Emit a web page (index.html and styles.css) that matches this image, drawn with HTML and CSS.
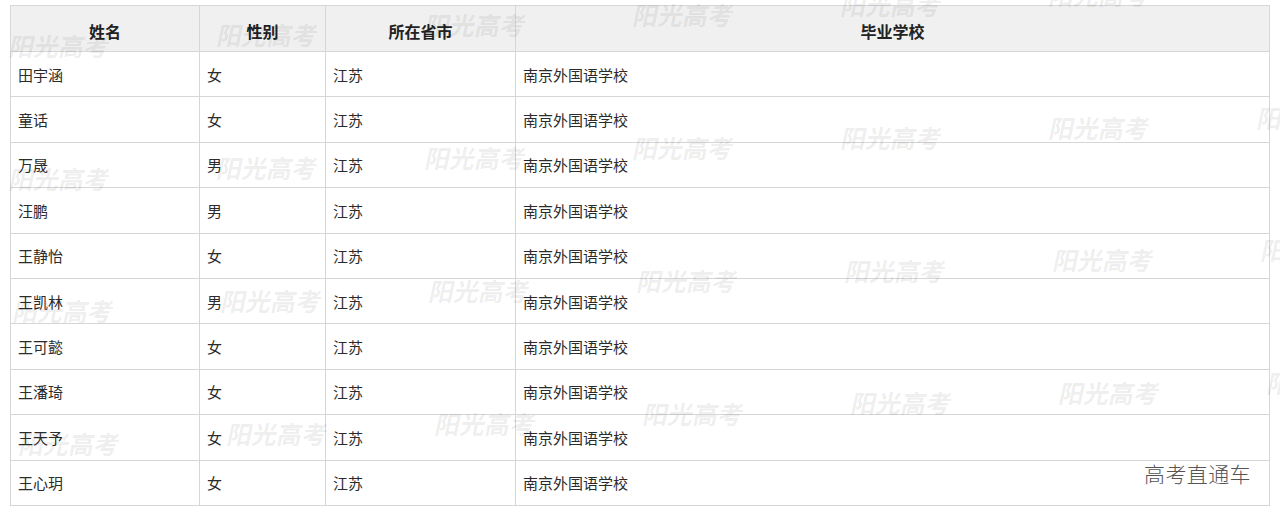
FILE: index.html
```html
<!DOCTYPE html>
<html lang="zh-CN">
<head>
<meta charset="utf-8">
<title>录取名单</title>
<link rel="stylesheet" href="styles.css">
</head>
<body>
<div class="page">
  <table class="list">
    <colgroup>
      <col class="c-name"><col class="c-sex"><col class="c-prov"><col class="c-school">
    </colgroup>
    <thead>
      <tr><th>姓名</th><th>性别</th><th>所在省市</th><th>毕业学校</th></tr>
    </thead>
    <tbody>
      <tr><td>田宇涵</td><td>女</td><td>江苏</td><td>南京外国语学校</td></tr>
      <tr><td>童话</td><td>女</td><td>江苏</td><td>南京外国语学校</td></tr>
      <tr><td>万晟</td><td>男</td><td>江苏</td><td>南京外国语学校</td></tr>
      <tr><td>汪鹏</td><td>男</td><td>江苏</td><td>南京外国语学校</td></tr>
      <tr><td>王静怡</td><td>女</td><td>江苏</td><td>南京外国语学校</td></tr>
      <tr><td>王凯林</td><td>男</td><td>江苏</td><td>南京外国语学校</td></tr>
      <tr><td>王可懿</td><td>女</td><td>江苏</td><td>南京外国语学校</td></tr>
      <tr><td>王潘琦</td><td>女</td><td>江苏</td><td>南京外国语学校</td></tr>
      <tr><td>王天予</td><td>女</td><td>江苏</td><td>南京外国语学校</td></tr>
      <tr><td>王心玥</td><td>女</td><td>江苏</td><td>南京外国语学校</td></tr>
    </tbody>
  </table>

  <div class="wm-layer" aria-hidden="true">
    <div class="wm-row"><span>阳光高考</span><span>阳光高考</span><span>阳光高考</span><span>阳光高考</span><span>阳光高考</span><span>阳光高考</span></div>
    <div class="wm-row"><span>阳光高考</span><span>阳光高考</span><span>阳光高考</span><span>阳光高考</span><span>阳光高考</span><span>阳光高考</span><span>阳光高考</span></div>
    <div class="wm-row wm-row-c"><span>阳光高考</span><span>阳光高考</span><span>阳光高考</span><span>阳光高考</span><span>阳光高考</span><span>阳光高考</span><span>阳光高考</span></div>
    <div class="wm-row wm-row-d"><span>阳光高考</span><span>阳光高考</span><span>阳光高考</span><span>阳光高考</span><span>阳光高考</span><span>阳光高考</span><span>阳光高考</span></div>
  </div>

  <div class="brand">高考直通车</div>
</div>
</body>
</html>
```

FILE: styles.css
```css
html, body {
  margin: 0;
  padding: 0;
  background: #fff;
}

.page {
  position: relative;
  width: 1280px;
  height: 514px;
  overflow: hidden;
  padding: 5px 0 0 10px;
  box-sizing: border-box;
  font-family: "Noto Sans CJK SC", "Noto Sans", sans-serif;
  color: #333;
}

.list {
  border-collapse: collapse;
  table-layout: fixed;
  width: 1259px;
  font-size: 15px;
}

.c-name { width: 189px; }
.c-sex { width: 126px; }
.c-prov { width: 190px; }
.c-school { width: 754px; }

.list th,
.list td {
  border: 1px solid #d6d6d6;
  padding: 0 7px;
  vertical-align: middle;
}

.list th {
  height: 46px;
  padding-top: 4px;
  box-sizing: border-box;
  background: #f0f0f0;
  font-weight: bold;
  font-size: 16px;
  color: #222;
  text-align: center;
}

.list td {
  height: 45.4px;
  box-sizing: border-box;
  text-align: left;
  color: #2b2b2b;
}

.wm-layer {
  position: absolute;
  left: 10px;
  top: 33px;
  display: flex;
  flex-direction: column;
  gap: 104px;
  transform: skewY(-2.8deg);
  transform-origin: 0 0;
  pointer-events: none;
}

.wm-row {
  display: flex;
  gap: 108px;
  white-space: nowrap;
}

.wm-row-c { padding-left: 4px; }
.wm-row-d { padding-left: 10px; }

.wm-row span {
  display: block;
  width: 100px;
  font-family: "Noto Sans CJK SC", serif;
  font-weight: bold;
  font-size: 25px;
  line-height: 29px;
  letter-spacing: 0;
  color: rgba(0, 0, 0, 0.08);
  transform: skewY(2.8deg) skewX(-12deg);
}

.brand {
  position: absolute;
  right: 29px;
  top: 458px;
  font-size: 21px;
  font-weight: 300;
  color: #555;
  letter-spacing: 0.4px;
}
```
